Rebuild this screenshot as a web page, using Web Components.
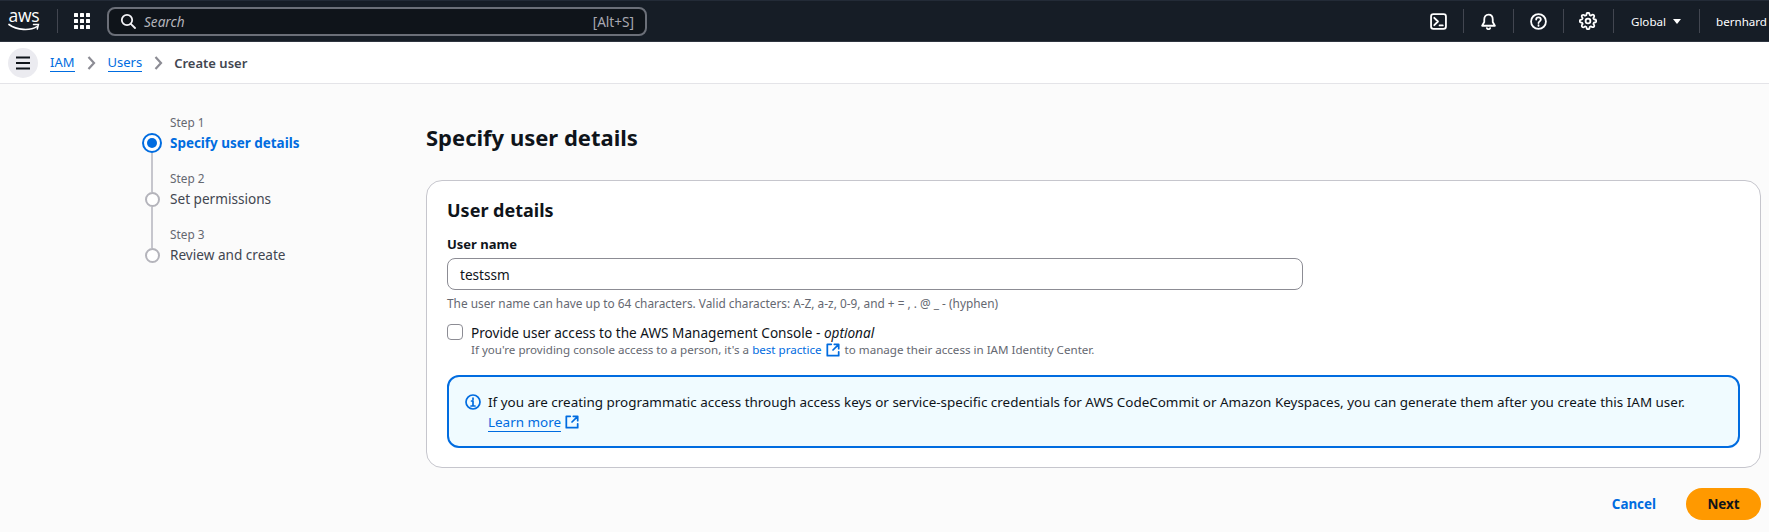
<!DOCTYPE html>
<html lang="en"><head><meta charset="utf-8"><title>Create user</title>
<style>
html,body{margin:0;padding:0;background:#fbfbfb;height:532px;overflow:hidden}
body{font-family:"Noto Sans","Open Sans",sans-serif;color:#0f141a;font-size:13.6px;display:flex;flex-direction:column}
</style></head><body>
<aws-topbar></aws-topbar>
<aws-breadcrumbs></aws-breadcrumbs>
<wizard-page></wizard-page>
<script>
const ICON={
search:'<circle cx="7" cy="7" r="5.2"/><path d="M10.8 10.8 15 15"/>',
term:'<rect x="1" y="1" width="14" height="14" rx="2.2"/><path d="M4 4.5 7.5 8 4 11.5M9 11.7h3"/>',
bell:'<path d="M8 1.5c-2.6 0-4 2-4 4.5v2.5L2 12h12l-2-3.5V6c0-2.5-1.4-4.5-4-4.5Z"/><path d="M6.5 14.2a1.6 1.6 0 0 0 3 0"/>',
help:'<circle cx="8" cy="8" r="7"/><path d="M5.8 6.2C5.8 5 6.8 4.2 8 4.2s2.2.8 2.2 2c0 1.7-2.2 1.7-2.2 3.3"/><path d="M8 11.4v.7"/>',
ext:'<path d="M6 1.5H1.5v13h13V10"/><path d="M9.5 1.5h5v5M14.5 1.5 8 8"/>',
info:'<circle cx="8" cy="8" r="7"/><path d="M8 7v5M6 12h4M6.5 7H8M8 4v1.4"/>',
};
const GEAR='<svg width="18" height="18" viewBox="0 0 24 24" fill="none" stroke="#fff" stroke-width="2.4" stroke-linecap="round" stroke-linejoin="round" aria-hidden="true"><circle cx="12" cy="12" r="3.2"/><path d="M19.4 15a1.65 1.65 0 0 0 .33 1.82l.06.06a2 2 0 0 1 0 2.83 2 2 0 0 1-2.83 0l-.06-.06a1.65 1.65 0 0 0-1.82-.33 1.65 1.65 0 0 0-1 1.51V21a2 2 0 0 1-2 2 2 2 0 0 1-2-2v-.09A1.65 1.65 0 0 0 9 19.4a1.65 1.65 0 0 0-1.82.33l-.06.06a2 2 0 0 1-2.83 0 2 2 0 0 1 0-2.83l.06-.06a1.65 1.65 0 0 0 .33-1.82 1.65 1.65 0 0 0-1.51-1H3a2 2 0 0 1-2-2 2 2 0 0 1 2-2h.09A1.65 1.65 0 0 0 4.6 9a1.65 1.65 0 0 0-.33-1.82l-.06-.06a2 2 0 0 1 0-2.83 2 2 0 0 1 2.83 0l.06.06a1.65 1.65 0 0 0 1.82.33H9a1.65 1.65 0 0 0 1-1.51V3a2 2 0 0 1 2-2 2 2 0 0 1 2 2v.09a1.65 1.65 0 0 0 1 1.51 1.65 1.65 0 0 0 1.82-.33l.06-.06a2 2 0 0 1 2.83 0 2 2 0 0 1 0 2.83l-.06.06a1.65 1.65 0 0 0-.33 1.82V9a1.65 1.65 0 0 0 1.51 1H21a2 2 0 0 1 2 2 2 2 0 0 1-2 2h-.09a1.65 1.65 0 0 0-1.51 1z"/></svg>';
const svg=(n,s,c='currentColor',w=2)=>`<svg width="${s}" height="${s}" viewBox="0 0 16 16" fill="none" stroke="${c}" stroke-width="${w}" stroke-linecap="round" stroke-linejoin="round" aria-hidden="true">${ICON[n]}</svg>`;
function def(name,html){customElements.define(name,class extends HTMLElement{constructor(){super();this.attachShadow({mode:'open'}).innerHTML=html}})}

def('top-sep',`<style>:host{display:block;width:1px;height:24px;background:#424650;flex:none}</style>`);

def('aws-logo',`<style>:host{display:flex;flex-direction:column;align-items:center;width:30px;height:28px;color:#fff}
span{font:400 17.5px/18px "Open Sans",sans-serif;letter-spacing:-.2px;display:block;margin-top:-1px}
svg{display:block;margin-top:-1px;flex:none}</style><span>aws</span>
<svg width="32" height="9" viewBox="0 0 32 9" fill="none"><path d="M1 1.5C9 7.5 22 8 29 3.6" stroke="#fff" stroke-width="1.7" stroke-linecap="round"/><path d="M25.5 1.6 30.4 1.5 29.3 6" stroke="#fff" stroke-width="1.5" fill="none" stroke-linecap="round"/></svg>`);

def('app-grid',`<style>:host{display:grid;grid-template-columns:repeat(3,4px);grid-auto-rows:4px;gap:2px}i{background:#fff;border-radius:.5px}</style>`+'<i></i>'.repeat(9));

def('top-search',`<style>:host{display:flex;align-items:center;box-sizing:border-box;width:540px;height:29px;border:2px solid #6b6f78;border-radius:8px;background:#0f141a;color:#fff;padding:0 11px 0 11px;font-size:13.6px}
svg{flex:none}em{margin-left:8px;color:#b4b4bb;font-style:italic;flex:1}b{font-weight:400;color:#a9a9b2}</style>${svg('search',16,'#f3f3f7',1.8)}<em>Search</em><b>[Alt+S]</b>`);

def('aws-topbar',`<style>:host{display:flex;align-items:center;box-sizing:border-box;height:42px;background:#161d26;border-top:1px solid #232b37;border-bottom:1px solid #2e3540;color:#fff;font-size:11.6px;padding:0 2px 0 9px;flex:none}
aws-logo{margin-right:18px}app-grid{margin:0 17px 0 16px}
.sp{flex:1}
.i{display:flex;width:49px;justify-content:center;flex:none}
.t{display:flex;align-items:center;gap:7px}
.car{width:0;height:0;border:4px solid transparent;border-top:5.5px solid #fff;border-bottom:0}
</style>
<aws-logo></aws-logo><top-sep></top-sep><app-grid></app-grid><top-search></top-search><span class="sp"></span>
<span class="i">${svg('term',17,'#fff',1.7)}</span><top-sep></top-sep>
<span class="i">${svg('bell',17,'#fff',1.7)}</span><top-sep></top-sep>
<span class="i">${svg('help',17,'#fff',1.7)}</span><top-sep></top-sep>
<span class="i">${GEAR}</span><top-sep></top-sep>
<span class="t" style="padding:0 18px 0 17px">Global<i class="car"></i></span><top-sep></top-sep>
<span style="padding-left:16px">bernhard</span>`);

def('aws-breadcrumbs',`<style>:host{display:flex;align-items:center;box-sizing:border-box;height:42px;background:#fff;padding-left:8px;border-bottom:1px solid #e4e4e8;flex:none;font-size:13px}
.m{width:30px;height:30px;border-radius:50%;background:#ebebf0;display:grid;place-items:center;margin-right:12px}
.m i{display:block;width:14px;height:2px;background:#0f141a;box-shadow:0 -5.5px #0f141a,0 5.5px #0f141a}
a{color:#006ce0;text-decoration:none;border-bottom:1px solid #006ce0;line-height:17px}
svg{margin:0 12px;flex:none}
svg+b{margin-left:-1px}
b{font-weight:600;color:#424650}</style>
<span class="m"><i></i></span><a>IAM</a><svg width="9" height="14" viewBox="0 0 9 14" fill="none" stroke="#8c8c94" stroke-width="2.2"><path d="M1.5 1 7 7 1.5 13"/></svg><a>Users</a><svg width="9" height="14" viewBox="0 0 9 14" fill="none" stroke="#8c8c94" stroke-width="2.2"><path d="M1.5 1 7 7 1.5 13"/></svg><b>Create user</b>`);

def('wizard-step',`<style>:host{display:grid;grid-template-columns:20px 1fr;column-gap:8px;color:#424650}
small{grid-column:2;font-size:11.8px;line-height:19px;color:#656871;height:19px}
.d{grid-column:1;grid-row:2;display:flex;flex-direction:column;align-items:center;position:relative}
.t{grid-column:2;font-size:13.6px;line-height:22px;height:22px}
.c{width:15px;height:15px;box-sizing:border-box;border:2px solid #b4b4bb;border-radius:50%;background:#fff;margin-top:3.5px;flex:none}
:host([active]) .c{width:20px;height:20px;margin-top:1px;border-color:#006ce0}
:host([active]) .c::after{content:"";display:block;width:10px;height:10px;background:#006ce0;border-radius:50%;margin:3px}
:host([active]) .t{color:#006ce0;font-weight:700;font-size:13.45px}
.l{display:none;position:absolute;left:9px;width:2px;background:#c6c6cd;top:18.5px;height:41px}
:host([line]) .l{display:block}
:host([active]) .l{top:21px;height:38.5px}
</style><small><slot name="n"></slot></small><span class="d"><span class="c"></span><span class="l"></span></span><span class="t"><slot></slot></span>`);

def('wizard-steps',`<style>:host{display:flex;flex-direction:column;gap:15px;width:284px;box-sizing:border-box}</style><slot></slot>`);

def('ext-link',`<style>:host{display:inline-flex;align-items:center;color:#006ce0}
a{color:inherit;text-decoration:none}svg{margin-left:4px}</style><a><slot></slot></a>${svg('ext',14,'#006ce0',2)}`);

def('info-alert',`<style>:host{display:grid;grid-template-columns:16px 1fr;column-gap:7px;box-sizing:border-box;border:2px solid #006ce0;border-radius:12px;background:#f0fbff;padding:14px 22px 7px 16px;font-size:13.45px;line-height:22px;color:#0f141a;height:73px}
svg{margin-top:3px}
</style>${svg('info',16,'#006ce0',1.7)}<div><slot></slot></div>`);

def('text-field',`<style>:host{display:flex;align-items:center;box-sizing:border-box;width:856px;height:32px;border:1px solid #8c8c94;border-radius:8px;background:#fff;padding:0 12px;font-size:13.6px;color:#0f141a}</style><slot></slot>`);

def('user-card',`<style>:host{display:block;box-sizing:border-box;border:1px solid #c6c6cd;border-radius:16px;background:#fff;padding:16px 20px 20px;height:288px}
h2{margin:0;font-size:18px;line-height:26px;font-weight:700;color:#0f141a}
label{display:block;font-weight:700;font-size:13px;line-height:20px;margin:11px 0 4px}
.h{font-size:11.85px;line-height:18px;color:#656871;margin:4px 0 0}
.cb{display:grid;grid-template-columns:16px 1fr;column-gap:8px;margin-top:12px}
.box{width:16px;height:16px;box-sizing:border-box;border:1px solid #8c8c94;border-radius:4px;background:#fff;margin-top:0}
.cl{font-size:13.6px;line-height:17px}.ch{grid-column:2;font-size:11.6px;line-height:17px;color:#656871}
info-alert{margin-top:17px}
.bp{vertical-align:top;margin-right:2px}
.lm{display:flex;width:max-content;margin-top:-2px}
.lm span{border-bottom:1px solid #006ce0;line-height:18px;display:inline-block}
</style>
<h2>User details</h2>
<label>User name</label>
<text-field>testssm</text-field>
<p class="h">The user name can have up to 64 characters. Valid characters: A-Z, a-z, 0-9, and + = , . @ _ - (hyphen)</p>
<div class="cb"><span class="box"></span><span class="cl">Provide user access to the AWS Management Console - <i>optional</i></span>
<span class="ch">If you're providing console access to a person, it's a <ext-link class="bp">best practice</ext-link> to manage their access in IAM Identity Center.</span></div>
<info-alert>If you are creating programmatic access through access keys or service-specific credentials for AWS CodeCommit or Amazon Keyspaces, you can generate them after you create this IAM user.<ext-link class="lm"><span>Learn more</span></ext-link></info-alert>`);

def('wizard-page',`<style>:host{display:grid;grid-template-columns:284px 1fr;padding:28px 8px 0 142px;flex:1}
h1{margin:0 0 27px;font-size:22px;line-height:32px;font-weight:700;color:#0f141a;padding-top:9px}
.f{display:flex;justify-content:flex-end;align-items:center;margin-top:20px;gap:30px}
.c{color:#006ce0;font-weight:700;font-size:13.4px}
.n{display:flex;align-items:center;justify-content:center;width:75px;height:32px;background:#ff9900;border-radius:20px;font-weight:700;font-size:13.4px;color:#0f141a}
wizard-steps{margin-top:1px}
</style>
<wizard-steps>
<wizard-step active line><span slot="n">Step 1</span>Specify user details</wizard-step>
<wizard-step line><span slot="n">Step 2</span>Set permissions</wizard-step>
<wizard-step><span slot="n">Step 3</span>Review and create</wizard-step>
</wizard-steps>
<div><h1>Specify user details</h1><user-card></user-card><div class="f"><span class="c">Cancel</span><span class="n">Next</span></div></div>`);
</script></body></html>
